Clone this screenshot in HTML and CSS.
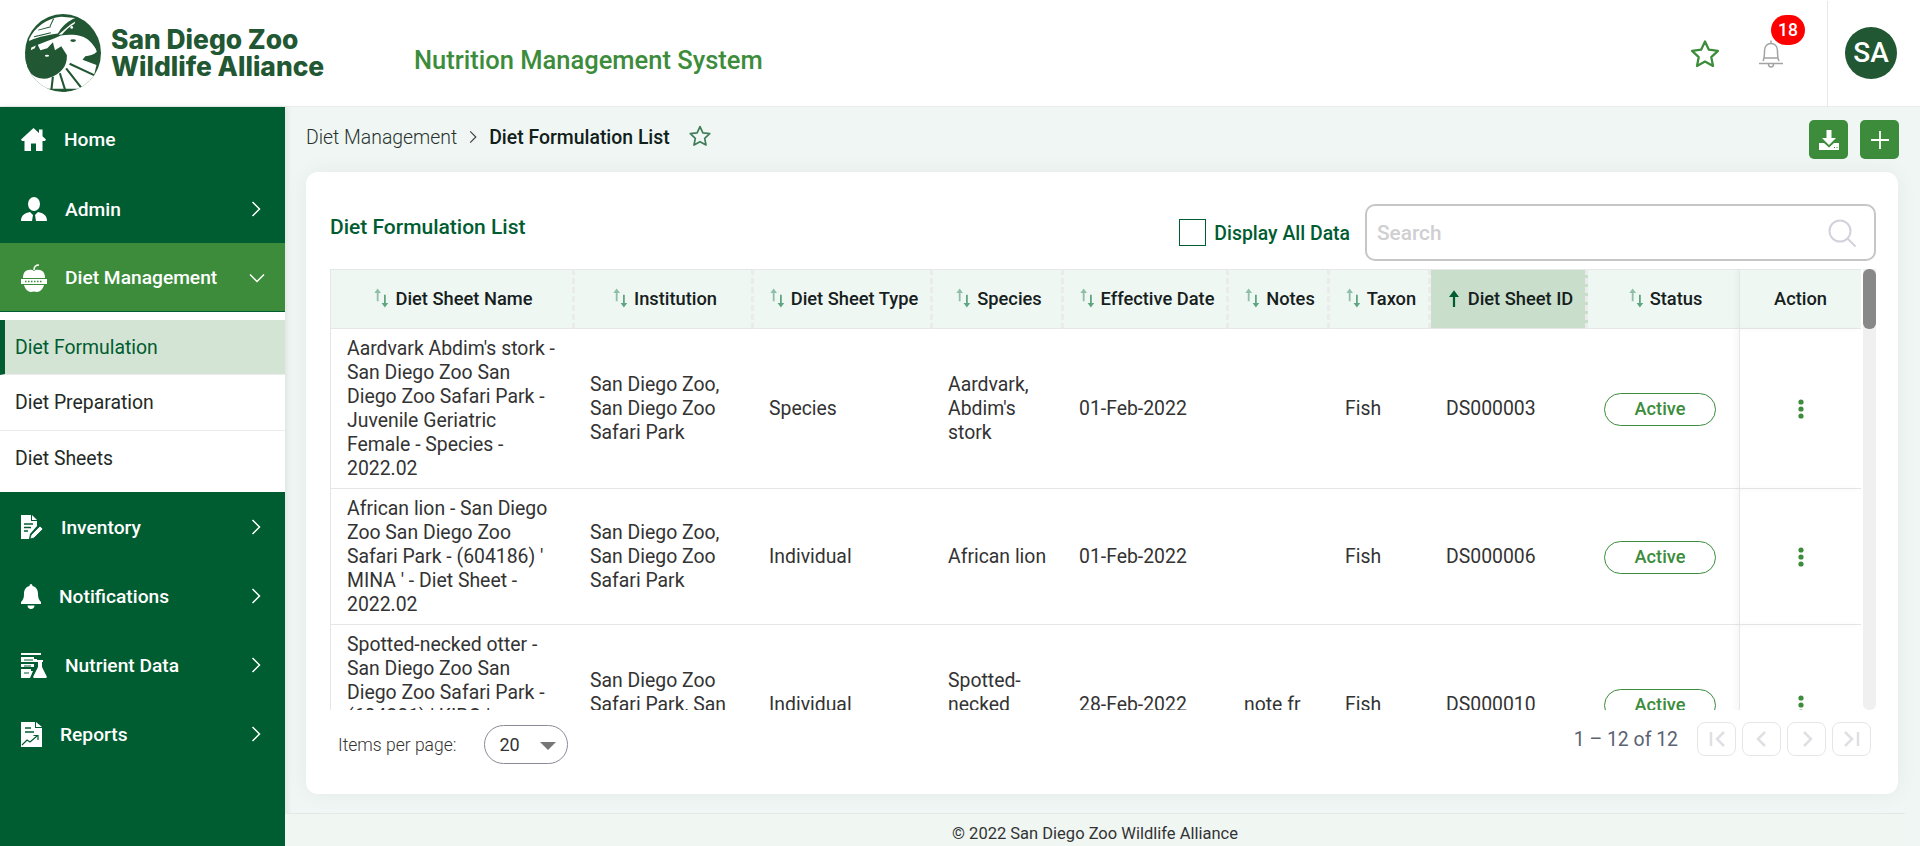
FILE: index.html
```html
<!DOCTYPE html>
<html lang="en">
<head>
    <meta charset="UTF-8">
    <meta name="viewport" content="width=device-width, initial-scale=1.0">
    <title>Diet Formulation List</title>
    <link rel="stylesheet" href="styles.css">
</head>
<body>

<svg class="defs" width="0" height="0">
    <symbol id="chev-right" viewBox="0 0 10 16"><path d="M1.5 1l7 7-7 7" fill="none" stroke="currentColor" stroke-width="1.5"/></symbol>
    <symbol id="chev-down" viewBox="0 0 16 10"><path d="M1 1.5l7 7 7-7" fill="none" stroke="currentColor" stroke-width="1.5"/></symbol>
    <symbol id="sort" viewBox="0 0 14 18">
        <path d="M4 .5L1 4.400h2.200V12h1.600V4.400H7z" fill="#8fbfa6"/>
        <path d="M10.500 17.500l3-3.900h-2.200V6H9.700v7.600H7.500z" fill="#5fa582"/>
    </symbol>
    <symbol id="star" viewBox="0 0 24 24"><path d="M12 2.600l2.900 6.200 6.800.8-5 4.700 1.300 6.700-6-3.300-6 3.300 1.300-6.700-5-4.700 6.800-.8z" fill="none" stroke="currentColor" stroke-width="1.700" stroke-linejoin="round"/></symbol>
    <symbol id="dots" viewBox="0 0 6 20"><circle cx="3" cy="3" r="2.600"/><circle cx="3" cy="10" r="2.600"/><circle cx="3" cy="17" r="2.600"/></symbol>
</svg>

<header class="topbar">
    <div class="logo">
        <svg class="logo-mark" viewBox="22 18 218 232" preserveAspectRatio="none">
            <clipPath id="logo-clip"><ellipse cx="131" cy="134" rx="109" ry="116"/></clipPath>
            <ellipse cx="131" cy="134" rx="109" ry="116" fill="#215732"/>
            <g clip-path="url(#logo-clip)">
                <path d="M34 92C50 58 85 30 126 26l40 4c-18 8-36 22-46 40l-4 6c-24 4-52 8-82 22z" fill="#fff"/>
                <path d="M60 66l36-10M48 86l48-12M104 32l-10 22" stroke="#215732" stroke-width="3" fill="none"/>
                <path d="M118 80c14-14 32-30 50-40 10 6 24 16 36 28-24 4-54 4-86 12z" fill="#215732"/>
                <path d="M118 80c14-14 32-30 48-40l-2 7c-14 8-26 20-36 32z" fill="#fff"/>
                <circle cx="156" cy="58" r="4" fill="#fff"/>
                <path d="M40 118c30-14 60-24 85-36 30-6 66-2 82 16 10 10 18 20 21 32-8 9-22 12-33 14l-8 10 40 16-16 70H70l-40-50z" fill="#fff"/>
                <path d="M150 166l70 34M140 180l50 66M122 194l20 66M102 204l-6 56" stroke="#215732" stroke-width="6" fill="none"/>
                <ellipse cx="160" cy="97" rx="8" ry="4" fill="#215732"/>
                <path d="M18 150l16-22 16-8 6-16 10 22 20-6 16-18 6 24 18-12 16 26c2 30-14 56-56 70-30 2-56-8-68-60z" fill="#215732"/>
                <ellipse cx="85" cy="142" rx="6" ry="3" fill="#fff"/>
            </g>
        </svg>
        <div class="logo-text">San Diego Zoo<br>Wildlife Alliance</div>
    </div>
    <div class="app-name">Nutrition Management System</div>
    <div class="top-actions">
        <svg class="top-star"><use href="#star"/></svg>
        <div class="bell-wrap">
            <svg class="top-bell" viewBox="0 0 26 30">
                <path d="M13 1.500v3M5 22c1.500-3 1.500-6 1.500-10 0-5 3-7.500 6.500-7.500s6.500 2.500 6.500 7.500c0 4 0 7 1.500 10M1 24.500h24M10.500 25c0 4 5 4 5 0M5.500 19h15" fill="none" stroke="#a3a3a3" stroke-width="1.500"/>
            </svg>
            <span class="badge">18</span>
        </div>
    </div>
    <div class="user-box"><div class="avatar">SA</div></div>
</header>

<div class="shell">
    <aside class="sidebar">
        <a class="nav-item nav-home">
            <svg class="nav-icon" width="25" height="23" viewBox="0 0 25 23"><path d="M12.500 0L0 11.500l1 1.500h2.500v10h6.500v-7.500h5V23h6.500V13H24l1-1.500-3.500-3.200V1.500h-3.500v3.600z" fill="#fff"/></svg>
            <span>Home</span>
        </a>
        <a class="nav-item">
            <svg class="nav-icon" width="26" height="24" viewBox="0 0 26 24"><ellipse cx="13" cy="7" rx="6" ry="7" fill="#fff"/><path d="M0 24c0-6 4-8 9-9l3 3-1 6h4l-1-6 3-3c5 1 9 3 9 9z" fill="#fff"/></svg>
            <span>Admin</span>
            <svg class="chev"><use href="#chev-right"/></svg>
        </a>
        <a class="nav-item nav-open">
            <svg class="nav-icon" width="26" height="28" viewBox="0 0 26 28"><path d="M13 7c-2-2-8-2-10 2-1 2-1 4-1 5h22c0-1 0-3-1-5-2-4-8-4-10-2zM3 21c1 4 4 7 7 7 1 0 2-.5 3-.5s2 .5 3 .5c3 0 6-3 7-7z" fill="#fff"/><path d="M13 6c0-3 2-5 5-5" fill="none" stroke="#fff" stroke-width="1.500"/><rect y="15" width="26" height="5" fill="#fff"/><path d="M4 17.500h18" stroke="#3c8c3c" stroke-width="1.500" stroke-dasharray="1.500 1.500"/></svg>
            <span>Diet Management</span>
            <svg class="chev-open"><use href="#chev-down"/></svg>
        </a>
        <div class="subnav">
            <a class="sub-item sub-active">Diet Formulation</a>
            <a class="sub-item">Diet Preparation</a>
            <a class="sub-item">Diet Sheets</a>
        </div>
        <a class="nav-item">
            <svg class="nav-icon" width="22" height="24" viewBox="0 0 22 24"><path d="M0 0h10v6h6v5l-7 8-1 5H0z" fill="#fff"/><path d="M11 0l5 5h-5z" fill="#fff"/><path d="M3 9h9M3 12.500h7M3 16h4" stroke="#005c31" stroke-width="1.300"/><path d="M10 20l9-9 3 3-9 9-4 1z" fill="#fff" stroke="#005c31" stroke-width=".8"/></svg>
            <span>Inventory</span>
            <svg class="chev"><use href="#chev-right"/></svg>
        </a>
        <a class="nav-item">
            <svg class="nav-icon" width="20" height="25" viewBox="0 0 20 25"><path d="M10 0c1 0 1.500 1 1.500 2 4 1 5.500 4 5.500 8 0 4 1 6 3 8v2H0v-2c2-2 3-4 3-8 0-4 1.500-7 5.500-8 0-1 .5-2 1.500-2zM6.500 21.500h7c0 2-1.500 3.500-3.500 3.500s-3.500-1.500-3.500-3.500z" fill="#fff"/></svg>
            <span>Notifications</span>
            <svg class="chev"><use href="#chev-right"/></svg>
        </a>
        <a class="nav-item">
            <svg class="nav-icon" width="26" height="25" viewBox="0 0 26 25"><path d="M0 0h20v2H0zM0 4h13v2h3v3H0zM0 11h13v3H0zM0 16h10v2h2l-3 7H0z" fill="#fff"/><path d="M3 7h9M3 13h7M3 20h5" stroke="#005c31" stroke-width="1"/><path d="M16 7h6v2h-1v5l5 10-1 1H13l-1-1 5-10V9h-1z" fill="#fff"/></svg>
            <span>Nutrient Data</span>
            <svg class="chev"><use href="#chev-right"/></svg>
        </a>
        <a class="nav-item">
            <svg class="nav-icon" width="21" height="25" viewBox="0 0 21 25"><path d="M0 0h14v6h7v19H0z" fill="#fff"/><path d="M15 0l6 5h-6z" fill="#fff"/><path d="M4 6h6M4 10h9" stroke="#005c31" stroke-width="1.400"/><path d="M1 23l5-5 3 2 7-6M12.500 13.500H17V18" fill="none" stroke="#005c31" stroke-width="1.200"/></svg>
            <span>Reports</span>
            <svg class="chev"><use href="#chev-right"/></svg>
        </a>
    </aside>

    <main class="content">
        <div class="crumb-row">
            <div class="crumbs">
                <span class="crumb-parent">Diet Management</span>
                <svg class="crumb-sep"><use href="#chev-right"/></svg>
                <span class="crumb-current">Diet Formulation List</span>
                <svg class="crumb-star"><use href="#star"/></svg>
            </div>
            <div class="crumb-btns">
                <button class="green-btn">
                    <svg width="24" height="24" viewBox="0 0 24 24"><path d="M9.500 2h5v8h4.500l-7 7-7-7h4.500z" fill="#fff"/><path d="M2 15h5l5 4.500 5-4.500h5v7H2z" fill="#fff"/><path d="M17 19.500h1M19.500 19.500h1" stroke="#3c8c3c" stroke-width="1"/></svg>
                </button>
                <button class="green-btn">
                    <svg width="22" height="22" viewBox="0 0 22 22"><path d="M11 2v18M2 11h18" stroke="#fff" stroke-width="1.800"/></svg>
                </button>
            </div>
        </div>

        <section class="card">
            <div class="card-head">
                <h2 class="card-title">Diet Formulation List</h2>
                <label class="show-all"><span class="check-box"></span><span class="show-all-text">Display All Data</span></label>
                <div class="search-box">
                    <span class="search-text">Search</span>
                    <svg width="30" height="30" viewBox="0 0 30 30"><circle cx="13" cy="13" r="10.500" fill="none" stroke="#d2d2de" stroke-width="2"/><path d="M20.500 20.500l8 8" stroke="#d2d2de" stroke-width="2"/></svg>
                </div>
            </div>

            <div class="table-area">
                <div class="table-clip">
                    <table class="diet-table">
                        <colgroup>
                            <col class="c-name"><col class="c-inst"><col class="c-type"><col class="c-species"><col class="c-date">
                            <col class="c-notes"><col class="c-taxon"><col class="c-id"><col class="c-status"><col class="c-action">
                        </colgroup>
                        <thead>
                            <tr>
                                <th><svg class="sort-icon"><use href="#sort"/></svg>Diet Sheet Name</th>
                                <th><svg class="sort-icon"><use href="#sort"/></svg>Institution</th>
                                <th><svg class="sort-icon"><use href="#sort"/></svg>Diet Sheet Type</th>
                                <th><svg class="sort-icon"><use href="#sort"/></svg>Species</th>
                                <th><svg class="sort-icon"><use href="#sort"/></svg>Effective Date</th>
                                <th><svg class="sort-icon"><use href="#sort"/></svg>Notes</th>
                                <th><svg class="sort-icon"><use href="#sort"/></svg>Taxon</th>
                                <th class="th-sorted">
                                    <svg class="sort-icon" viewBox="0 0 14 18"><path d="M7 2L2.500 8H6v9h2V8h3.500z" fill="#005c31"/></svg>Diet Sheet ID
                                </th>
                                <th class="th-status"><svg class="sort-icon"><use href="#sort"/></svg>Status</th>
                                <th class="th-action">Action</th>
                            </tr>
                        </thead>
                        <tbody>
                            <tr>
                                <td>Aardvark Abdim's stork - San Diego Zoo San Diego Zoo Safari Park - Juvenile Geriatric Female - Species - 2022.02</td>
                                <td>San Diego Zoo, San Diego Zoo Safari Park</td>
                                <td>Species</td>
                                <td>Aardvark, Abdim's stork</td>
                                <td>01-Feb-2022</td>
                                <td></td>
                                <td>Fish</td>
                                <td>DS000003</td>
                                <td><span class="pill">Active</span></td>
                                <td class="td-action"><svg class="dots"><use href="#dots"/></svg></td>
                            </tr>
                            <tr>
                                <td>African lion - San Diego Zoo San Diego Zoo Safari Park - (604186) ' MINA ' - Diet Sheet - 2022.02</td>
                                <td>San Diego Zoo, San Diego Zoo Safari Park</td>
                                <td>Individual</td>
                                <td>African lion</td>
                                <td>01-Feb-2022</td>
                                <td></td>
                                <td>Fish</td>
                                <td>DS000006</td>
                                <td><span class="pill">Active</span></td>
                                <td class="td-action"><svg class="dots"><use href="#dots"/></svg></td>
                            </tr>
                            <tr>
                                <td>Spotted-necked otter - San Diego Zoo San Diego Zoo Safari Park - (604201) ' KIBO ' - Juvenile Female - Diet Sheet - 2022.02</td>
                                <td>San Diego Zoo Safari Park, San Diego Zoo</td>
                                <td>Individual</td>
                                <td>Spotted-necked otter</td>
                                <td>28-Feb-2022</td>
                                <td>note fr</td>
                                <td>Fish</td>
                                <td>DS000010</td>
                                <td><span class="pill">Active</span></td>
                                <td class="td-action"><svg class="dots"><use href="#dots"/></svg></td>
                            </tr>
                        </tbody>
                    </table>
                </div>
                <div class="scroll-rail"><div class="scroll-thumb"></div></div>
            </div>

            <div class="pager">
                <div class="pager-left">
                    <span class="per-page">Items per page:</span>
                    <div class="per-select"><span>20</span><span class="caret"></span></div>
                </div>
                <div class="pager-right">
                    <span class="range">1 – 12 of 12</span>
                    <button class="page-btn"><svg width="24" height="24" viewBox="0 0 24 24"><path d="M6 5v14M19 5l-7 7 7 7" fill="none" stroke="#dfdfe4" stroke-width="2.500"/></svg></button>
                    <button class="page-btn"><svg width="24" height="24" viewBox="0 0 24 24"><path d="M15 5l-7 7 7 7" fill="none" stroke="#dfdfe4" stroke-width="2.500"/></svg></button>
                    <button class="page-btn"><svg width="24" height="24" viewBox="0 0 24 24"><path d="M9 5l7 7-7 7" fill="none" stroke="#dfdfe4" stroke-width="2.500"/></svg></button>
                    <button class="page-btn"><svg width="24" height="24" viewBox="0 0 24 24"><path d="M18 5v14M5 5l7 7-7 7" fill="none" stroke="#dfdfe4" stroke-width="2.500"/></svg></button>
                </div>
            </div>
        </section>

        <footer class="page-foot">© 2022 San Diego Zoo Wildlife Alliance</footer>
    </main>
</div>

</body>
</html>
```

FILE: styles.css
```css
* {
    box-sizing: border-box;
}

body {
    margin: 0;
    height: 846px;
    overflow: hidden;
    font-family: Roboto, "Liberation Sans", sans-serif;
    color: #333;
    background-color: #f0f6f3;
}

.defs {
    display: block;
    height: 0;
}

/* top bar */
.topbar {
    display: flex;
    align-items: center;
    height: 107px;
    padding-left: 25px;
    background-color: #fff;
    border-bottom: 1px solid #e8ecea;
}

.logo {
    display: flex;
    align-items: center;
    gap: 10px;
    width: 389px;
}

.logo-mark {
    width: 76px;
    height: 78px;
    flex: none;
}

.logo-text {
    font-family: Inter, "Open Sans", sans-serif;
    font-weight: 800;
    font-size: 26.400px;
    line-height: 27px;
    color: #215732;
    white-space: nowrap;
}

.app-name {
    font-size: 25.500px;
    font-weight: 500;
    color: #3c8c3c;
    margin-top: 14px;
}

.top-actions {
    display: flex;
    align-items: center;
    margin-left: auto;
    gap: 37px;
    margin-top: 1px;
}

.top-star {
    width: 32px;
    height: 32px;
    color: #3c8c3c;
}

.bell-wrap {
    position: relative;
    width: 26px;
    height: 30px;
    margin-right: 43px;
}

.top-bell {
    display: block;
    width: 26px;
    height: 30px;
}

.badge {
    position: absolute;
    left: 13px;
    top: -24px;
    width: 34px;
    height: 30px;
    border-radius: 15px;
    background-color: #f00;
    color: #fff;
    font-size: 17.500px;
    font-weight: 500;
    line-height: 30px;
    text-align: center;
}

.user-box {
    display: flex;
    align-items: center;
    width: 93px;
    height: 105px;
    padding-left: 17px;
    border-left: 1px solid #e8e8e8;
}

.avatar {
    width: 52px;
    height: 52px;
    border-radius: 50%;
    background-color: #215732;
    color: #fff;
    font-size: 28px;
    font-weight: 500;
    line-height: 52px;
    text-align: center;
}

.shell {
    display: grid;
    grid-template-columns: 285px 1fr;
    height: 739px;
}

/* side menu */
.sidebar {
    background-color: #005c31;
    box-shadow: 2px 0 6px rgba(0, 0, 0, 0.08);
}

.nav-item {
    display: flex;
    align-items: center;
    gap: 18px;
    height: 69px;
    padding-left: 21px;
    padding-top: 1px;
    color: #fff;
    font-size: 19.200px;
    font-weight: 500;
}

.nav-home {
    height: 67px;
    padding-top: 0;
    padding-bottom: 2px;
}

.nav-open {
    background-color: #3c8c3c;
    border-bottom: 1px solid #005c31;
}

.nav-icon {
    flex: none;
}

.chev {
    width: 10px;
    height: 16px;
    margin-left: auto;
    margin-right: 24px;
}

.chev-open {
    width: 16px;
    height: 10px;
    margin-left: auto;
    margin-right: 20px;
}

.subnav {
    height: 180px;
    padding-top: 8px;
    background-color: #fff;
}

.sub-item {
    display: block;
    height: 56px;
    padding-left: 15px;
    font-size: 19.400px;
    line-height: 56px;
    color: #1f2a26;
    border-bottom: 1px solid #ececec;
}

.sub-item:last-child {
    border-bottom: none;
}

.sub-active {
    height: 55px;
    padding-left: 10px;
    line-height: 55px;
    color: #005c31;
    background-color: #d3e4d4;
    border-left: 5px solid #005c31;
}

/* main part */
.content {
    display: flex;
    flex-direction: column;
    padding-left: 21px;
}

.crumb-row {
    display: flex;
    align-items: center;
    justify-content: space-between;
    height: 65px;
    padding-right: 21px;
}

.crumbs {
    display: flex;
    align-items: center;
    font-size: 19.400px;
    margin-bottom: 5px;
}

.crumb-parent {
    font-weight: 300;
    color: #27332e;
}

.crumb-sep {
    width: 8px;
    height: 14px;
    margin: 0 12px;
    color: #444;
}

.crumb-current {
    font-weight: 500;
    color: #10201a;
}

.crumb-star {
    width: 24px;
    height: 24px;
    margin-left: 18px;
    margin-bottom: 2px;
    color: #3f7d58;
}

.crumb-btns {
    display: flex;
    gap: 12px;
}

.green-btn {
    display: flex;
    align-items: center;
    justify-content: center;
    width: 39px;
    height: 39px;
    padding: 0;
    border: none;
    border-radius: 5px;
    background-color: #3c8c3c;
}

.card {
    display: flex;
    flex-direction: column;
    width: 1592px;
    height: 622px;
    padding: 32px 22px 0 24px;
    background-color: #fff;
    border-radius: 12px;
    box-shadow: 0 0 22px rgba(0, 0, 0, 0.05);
}

.card-head {
    display: flex;
    align-items: center;
    height: 57px;
    margin-bottom: 8px;
}

.card-title {
    margin: 0 auto 12px 0;
    font-size: 21px;
    font-weight: 500;
    color: #005c31;
}

.show-all {
    display: flex;
    align-items: center;
    gap: 8px;
    font-size: 19.400px;
    font-weight: 500;
    color: #005c31;
}

.show-all-text {
    padding-top: 2px;
}

.check-box {
    width: 27px;
    height: 27px;
    border: 1px solid #005c31;
}

.search-box {
    display: flex;
    align-items: center;
    justify-content: space-between;
    width: 511px;
    height: 57px;
    margin-left: 15px;
    padding: 0 17px 0 10px;
    border: 2px solid #c6c6c6;
    border-radius: 10px;
}

.search-text {
    font-size: 20.800px;
    font-weight: 500;
    color: #cfcfd2;
}

.table-area {
    display: flex;
    height: 441px;
}

.table-clip {
    width: 1533px;
    overflow: hidden;
}

.diet-table {
    width: 1531px;
    table-layout: fixed;
    border-collapse: separate;
    border-spacing: 0;
    font-size: 19.400px;
    line-height: 24px;
}

.c-name { width: 245px; }
.c-inst { width: 179px; }
.c-type { width: 179px; }
.c-species { width: 131px; }
.c-date { width: 165px; }
.c-notes { width: 101px; }
.c-taxon { width: 101px; }
.c-id { width: 157px; }
.c-status { width: 151px; }
.c-action { width: 122px; }

.diet-table th {
    height: 60px;
    padding: 0 0 0 3px;
    font-size: 18.300px;
    font-weight: 500;
    color: #16201c;
    white-space: nowrap;
    background-color: #eff7f3;
    border-top: 1px solid #e6e6e6;
    border-bottom: 1px solid #e6e6e6;
    border-right: 3px dashed #ebebeb;
}

.diet-table th:first-child {
    border-left: 1px solid #e6e6e6;
}

.diet-table th.th-status {
    border-right: none;
}

.diet-table th.th-action {
    padding-left: 0;
    border-right: none;
    border-left: 1px solid #e6e6e6;
    box-shadow: -3px 0 5px rgba(0, 0, 0, 0.03);
}

.diet-table th.th-sorted {
    background-color: #c9dfcb;
}

.sort-icon {
    width: 16px;
    height: 20px;
    margin-right: 6px;
    vertical-align: -3px;
}

.diet-table td {
    padding: 8px 16px 7px 15px;
    color: #333;
    border-bottom: 1px solid #e6e6e6;
    vertical-align: middle;
}

.diet-table td:first-child {
    padding-left: 16px;
    border-left: 1px solid #e6e6e6;
}

.diet-table td.td-action {
    padding: 0;
    text-align: center;
    border-left: 1px solid #e6e6e6;
    box-shadow: -4px 0 6px rgba(0, 0, 0, 0.03);
}

.pill {
    display: block;
    width: 112px;
    height: 33px;
    margin-left: 1px;
    border: 1px solid #3c8c3c;
    border-radius: 17px;
    color: #3c8c3c;
    font-size: 18.200px;
    font-weight: 500;
    line-height: 30px;
    text-align: center;
}

.dots {
    display: inline-block;
    width: 6px;
    height: 20px;
    fill: #3c8c3c;
    vertical-align: middle;
}

.scroll-rail {
    width: 13px;
    background-color: #f0f0f0;
    border-radius: 0 0 6px 6px;
}

.scroll-thumb {
    height: 60px;
    background-color: #888;
    border-radius: 6px;
}

.pager {
    display: flex;
    justify-content: space-between;
    align-items: flex-start;
    padding: 12px 5px 0 8px;
}

.pager-left {
    display: flex;
    align-items: center;
    gap: 28px;
    margin-top: 3px;
}

.per-page {
    font-size: 17.500px;
    font-weight: 300;
    color: #333;
    padding-top: 1px;
}

.per-select {
    display: flex;
    align-items: center;
    justify-content: space-between;
    width: 84px;
    height: 39px;
    padding: 0 11px 0 14px;
    border: 1px solid #8b8b98;
    border-radius: 20px;
    font-size: 18px;
    color: #333;
}

.caret {
    width: 0;
    height: 0;
    border-left: 8px solid transparent;
    border-right: 8px solid transparent;
    border-top: 8px solid #777;
    margin-top: 2px;
}

.pager-right {
    display: flex;
    align-items: center;
    gap: 6px;
}

.range {
    margin-right: 13px;
    font-size: 19.400px;
    color: #5a6272;
}

.page-btn {
    display: flex;
    align-items: center;
    justify-content: center;
    width: 39px;
    height: 34px;
    padding: 0;
    background-color: #fff;
    border: 1px solid #e6e6e9;
    border-radius: 8px;
}

.page-foot {
    height: 33px;
    margin-top: 19px;
    margin-left: -21px;
    margin-right: 15px;
    padding-top: 4px;
    background-color: #f0f7f3;
    border-top: 1px solid #e3e9e6;
    font-size: 16.500px;
    line-height: 32px;
    text-align: center;
    color: #333;
}
```
